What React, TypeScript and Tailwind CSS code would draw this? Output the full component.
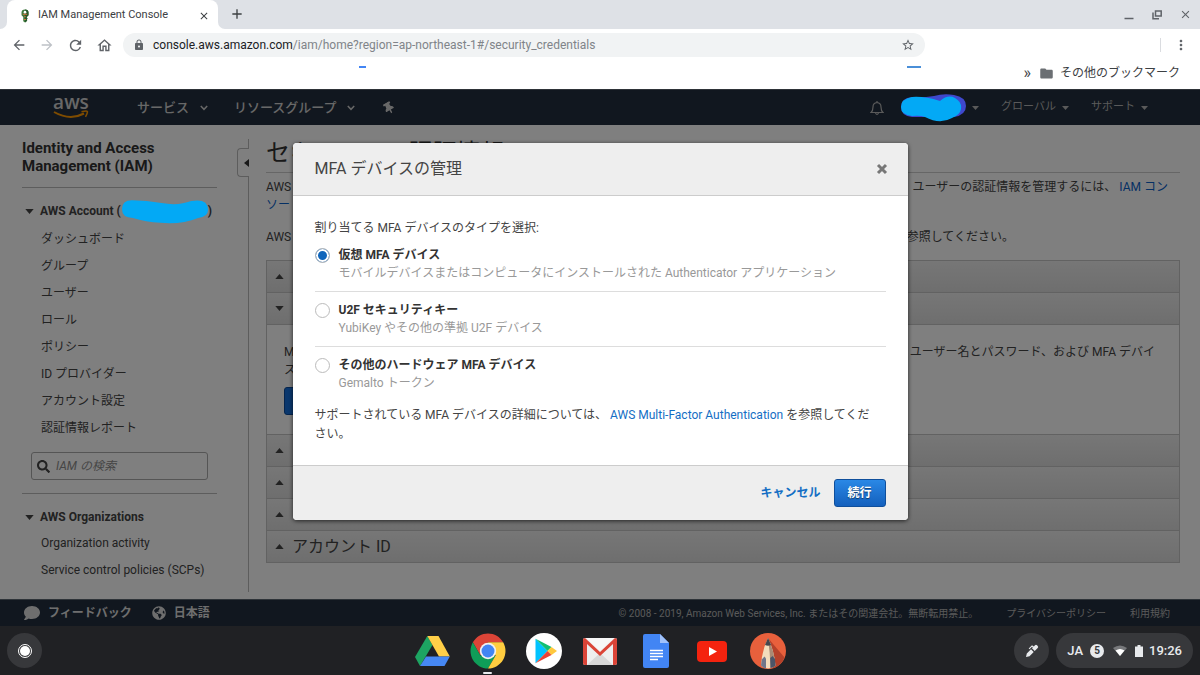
import React from "react";
import { FaSearch, FaComment, FaGlobeAmericas, FaThumbtack } from "react-icons/fa";
import { MdArrowBack, MdArrowForward, MdRefresh, MdOutlineHome, MdLock, MdStarBorder, MdMoreVert, MdFolder, MdClose, MdAdd } from "react-icons/md";

const navItems = [
  "ダッシュボード",
  "グループ",
  "ユーザー",
  "ロール",
  "ポリシー",
  "ID プロバイダー",
  "アカウント設定",
  "認証情報レポート",
];

const devices = [
  { id: "virtual", name: "仮想 MFA デバイス", note: "モバイルデバイスまたはコンピュータにインストールされた Authenticator アプリケーション" },
  { id: "u2f", name: "U2F セキュリティキー", note: "YubiKey やその他の準拠 U2F デバイス" },
  { id: "hardware", name: "その他のハードウェア MFA デバイス", note: "Gemalto トークン" },
];

function Triangle({ up = false }: { up?: boolean }) {
  return (
    <svg viewBox="0 0 10 6" className="h-[5px] w-[9px] shrink-0" fill="currentColor">
      <path d={up ? "M5 0 10 6H0z" : "M0 0h10L5 6z"} />
    </svg>
  );
}

function Caret() {
  return (
    <svg viewBox="0 0 7 4" className="h-1 w-[7px] shrink-0" fill="currentColor">
      <path d="M0 0h7L3.500 4z" />
    </svg>
  );
}

function Chevron() {
  return (
    <svg viewBox="0 0 8 6" className="h-[6px] w-2" fill="none" stroke="currentColor" strokeWidth="1.500">
      <path d="M.8 1 4 4.300 7.200 1" />
    </svg>
  );
}

function BrowserChrome() {
  return (
    <header className="bg-white text-[#5f6368]">
      <div className="flex h-[29px] items-end justify-between bg-[#dee1e6]">
        <div className="flex items-end">
          <div className="h-[29px] w-[7px] bg-white">
            <div className="h-full rounded-br-lg bg-[#dee1e6]" />
          </div>
          <div className="flex h-[29px] w-[211px] items-center rounded-t-lg bg-white pt-0.5 pr-2 pl-[11px]">
            <svg viewBox="0 0 14 16" className="h-3.5 w-3.5">
              <path d="M3 4q0-3.500 4-3.500T11 4v3L9 9v1l1 1-1 1 .5 1.500L7 15.500 5 14V9L3 7z" fill="#3f7a3c" />
              <path d="M7 .5Q11 .5 11 4v3L9 9v1l1 1-1 1 .5 1.500L7 15.500z" fill="#275a2b" />
              <path d="M4.500 6h5M7 8v1.500M6 12h2" stroke="#e0713c" strokeWidth="1.400" />
              <circle cx="7" cy="3.600" r="1.500" fill="#fff" />
            </svg>
            <span className="ml-1.5 flex-1 text-[11px] text-[#3c4043]">IAM Management Console</span>
            <button aria-label="タブを閉じる" className="text-[#3c4043]"><MdClose size={12} /></button>
          </div>
          <div className="h-[29px] w-[7px] bg-white">
            <div className="h-full rounded-bl-lg bg-[#dee1e6]" />
          </div>
          <button aria-label="新しいタブ" className="mb-[7px] ml-1 text-[#3c4043]"><MdAdd size={16} /></button>
        </div>
        <div className="mb-2 flex items-center gap-4 pr-2">
          <button aria-label="最小化">
            <svg viewBox="0 0 12 12" className="size-3"><path d="M1.500 9.500h9" stroke="currentColor" strokeWidth="1.500" /></svg>
          </button>
          <button aria-label="元のサイズに戻す">
            <svg viewBox="0 0 12 12" className="size-3" fill="none" stroke="currentColor" strokeWidth="1.500"><path d="M4.500 2h5.700v5H4.500zM2 3.500v6.200h6" /></svg>
          </button>
          <button aria-label="閉じる"><MdClose size={13} /></button>
        </div>
      </div>
      <div className="flex h-8 items-center pr-[11px] pl-[11px]">
        <nav className="flex items-center gap-3">
          <button aria-label="戻る"><MdArrowBack size={16} /></button>
          <button aria-label="進む" className="text-[#bdc1c6]"><MdArrowForward size={16} /></button>
          <button aria-label="再読み込み"><MdRefresh size={17} /></button>
          <button aria-label="ホーム"><MdOutlineHome size={17} /></button>
        </nav>
        <div className="ml-2.5 flex h-6 w-[802px] items-center rounded-full bg-[#f1f3f4] px-2.5">
          <MdLock size={12} />
          <span className="ml-2 flex-1 text-xs text-[#808489]">
            <span className="text-[#202124]">console.aws.amazon.com</span>/iam/home?region=ap-northeast-1#/security_credentials
          </span>
          <button aria-label="ブックマークに追加"><MdStarBorder size={14} /></button>
        </div>
        <div className="ml-auto flex items-center gap-3">
          <span className="h-3.5 w-px bg-[#dadce0]" />
          <button aria-label="メニュー"><MdMoreVert size={16} /></button>
        </div>
      </div>
      <div className="flex h-7 items-start pl-[359px]">
        <span className="mt-[5px] h-0.5 w-[7px] bg-[#4285f4]" />
        <span className="mt-[5px] ml-[541px] h-0.5 w-3.5 bg-[#4a8fd8]" />
        <div className="ml-auto flex h-6 items-center pr-5 text-xs text-[#3c4043]">
          <span className="mr-2 text-base leading-none">»</span>
          <MdFolder size={15} className="mr-1.5 text-[#6b6f73]" />
          <a href="#bookmarks">その他のブックマーク</a>
        </div>
      </div>
    </header>
  );
}

function ConsoleNav() {
  return (
    <nav className="flex h-9 items-center border-t border-[#5d6670] bg-[#232f3e] pr-[52px] pl-[53px] text-[13px] font-medium text-[#d0d0d0]">
      <a href="#aws" className="flex w-9 flex-col items-center">
        <span className="font-['Open_Sans'] text-[19px] leading-[15px] font-semibold text-[#d0d0d0]">aws</span>
        <svg viewBox="0 0 36 10" className="h-[10px] w-9">
          <path d="M1 2q16 9 30 1.500" fill="none" stroke="#ff9900" strokeWidth="2" />
          <path d="M28.500 1.800q6-1.500 6 0t-2 5" fill="none" stroke="#ff9900" strokeWidth="1.500" />
        </svg>
      </a>
      <a href="#services" className="ml-12 flex items-center gap-[11px]">サービス<Chevron /></a>
      <a href="#groups" className="ml-[26px] flex items-center gap-[10px]">リソースグループ<Chevron /></a>
      <button aria-label="ピン留め" className="ml-7 -rotate-30"><FaThumbtack size={12} /></button>
      <div className="ml-auto flex items-center text-[11px] font-normal text-[#b4b4b4]">
        <button aria-label="通知">
          <svg viewBox="0 0 14 16" className="h-4 w-3.5" fill="none" stroke="currentColor" strokeWidth="1.200">
            <path d="M1 12.500q2-1.500 2-5.500 0-4 4-4.500Q11 3 11 7q0 4 2 5.500zM7 1v1.500M5.500 13q1.500 3 3 0" />
          </svg>
        </button>
        <button aria-label="アカウント" className="ml-4 flex items-center gap-1">
          <svg viewBox="0 0 68 30" className="relative z-20 h-[30px] w-[68px]">
            <path d="M12 4q10 1 22-1Q44 0 54 2q12 2 12 11 0 9-12 11H12Q1 23 1 14T12 4z" fill="#3f48cc" />
            <path d="M12 4q12-1 28 4Q48 1 55 5q7 4 6 11-1 6-9 9-12 7-27-1-5-2-13-1Q1 22 1 14T12 4z" fill="#03a9f5" />
          </svg>
          <Caret />
        </button>
        <button className="ml-[22px] flex items-center gap-1.5">グローバル<Caret /></button>
        <button className="ml-[22px] flex items-center gap-1.5">サポート<Caret /></button>
      </div>
    </nav>
  );
}

function Sidebar() {
  return (
    <aside className="relative w-[249px] shrink-0 pt-3.5 pr-8 pb-2 pl-[22px] text-xs text-[#444]">
      <h2 className="text-[15px] leading-[18px] font-bold text-[#333]">Identity and Access Management (IAM)</h2>
      <hr className="mt-3 border-[#bbb]" />
      <div className="mt-[11px] flex h-6 items-center gap-1.5 pl-[3px] font-bold">
        <Triangle />
        <span className="flex items-center whitespace-nowrap">
          AWS Account (
          <svg viewBox="0 0 88 27" className="relative z-20 -my-2 h-[27px] w-[87px]">
            <path d="M11 2q15 0 30 3 17 3 30-2 17-3 17 9 0 7-10 8-17 7-38 5-15-1-28-5Q1 20 1 11T11 2z" fill="#03a9f5" />
          </svg>
          )
        </span>
      </div>
      <ul className="mt-0.5 pl-[19px]">
        {navItems.map((item) => (
          <li key={item} className="flex h-[27px] items-center"><a href="#nav">{item}</a></li>
        ))}
      </ul>
      <label className="mt-[11px] mr-[9px] ml-[9px] flex h-7 items-center gap-1.5 rounded-[3px] border border-[#aaa] px-[5px]">
        <FaSearch size={13} className="shrink-0" />
        <input aria-label="IAM の検索" placeholder="IAM の検索" className="w-full min-w-0 bg-transparent text-xs italic outline-none placeholder:text-[#8c8c8c]" />
      </label>
      <hr className="mt-[13px] border-[#bbb]" />
      <div className="mt-[11px] flex h-6 items-center gap-1.5 pl-[3px] font-bold">
        <Triangle />AWS Organizations
      </div>
      <ul className="pl-[19px]">
        <li className="flex h-[27px] items-center"><a href="#activity">Organization activity</a></li>
        <li className="flex h-[27px] items-center"><a href="#scp">Service control policies (SCPs)</a></li>
      </ul>
      <span className="absolute top-3.5 right-0 bottom-[7px] w-px bg-[#bbb]" />
      <button aria-label="サイドバーを閉じる" className="absolute top-[23px] right-0 flex h-[29px] w-3 items-center justify-end rounded-l border border-r-0 border-[#bbb] bg-white text-[#333]">
        <svg viewBox="0 0 5 8" className="h-2 w-[5px]"><path d="M5 0v8L0 4z" fill="currentColor" /></svg>
      </button>
    </aside>
  );
}

function Section({ label, title, open = false }: { label?: string; title?: string; open?: boolean }) {
  return (
    <button aria-label={label} className="flex h-8 w-full items-center gap-2 border-b border-[#c4c4c4] bg-linear-to-b from-[#eee] to-[#ddd] px-2 text-base text-[#444]">
      <Triangle up={!open} />{title}
    </button>
  );
}

function Credentials() {
  return (
    <section className="min-w-0 flex-1 overflow-hidden pt-3.5 pr-5 pl-[17px] text-xs leading-[18px] text-[#444]">
      <h1 className="border-b border-[#ccc] pb-[5px] text-2xl leading-7 text-[#333]">セキュリティ認証情報</h1>
      <div className="mt-[5px] flex justify-between pr-3 whitespace-nowrap">
        <span>AWS</span>
        <span>ユーザーの認証情報を管理するには、 <a href="#iam" className="text-[#0a61c9]">IAM コン</a></span>
      </div>
      <a href="#iam" className="block text-[#0a61c9]">ソー</a>
      <div className="mt-3.5 flex justify-between pr-[166px] whitespace-nowrap">
        <span>AWS</span>
        <span>参照してください。</span>
      </div>
      <div className="mt-3.5 border border-b-0 border-[#c4c4c4]">
        <Section label="パスワード" />
        <Section label="多要素認証 (MFA)" open />
        <div className="h-[110px] border-b border-[#c4c4c4] px-[17px] pt-[18px]">
          <div className="flex justify-between pr-[7px] whitespace-nowrap">
            <span>M</span>
            <span>ユーザー名とパスワード、および MFA デバイ</span>
          </div>
          <p>ス</p>
          <button aria-label="MFA の有効化" className="mt-2 h-7 w-24 rounded-[3px] border border-[#0a4a9c] bg-[#146eda]" />
        </div>
        <Section label="アクセスキー" />
        <Section label="CloudFront のキーペア" />
        <Section label="X.509 証明書" />
        <Section title="アカウント ID" />
      </div>
    </section>
  );
}

function MfaDialog() {
  return (
    <div role="dialog" aria-labelledby="mfa-title" className="w-[615px] max-w-full overflow-hidden rounded bg-white text-xs text-[#444] shadow-[0_1px_4px_rgba(0,0,0,0.7)]">
      <div className="flex h-[53px] items-center justify-between border-b border-[#ccc] bg-[#eee] pr-5 pl-[22px]">
        <h2 id="mfa-title" className="text-base">MFA デバイスの管理</h2>
        <button aria-label="閉じる" className="text-[#777]">
          <svg viewBox="0 0 12 12" className="size-3"><path d="M2 2l8 8M10 2l-8 8" stroke="currentColor" strokeWidth="3" /></svg>
        </button>
      </div>
      <div className="px-[22px] pt-[23px] pb-[21px] leading-[18px]">
        <fieldset>
          <legend>割り当てる MFA デバイスのタイプを選択:</legend>
          <div className="mt-[9px] flex flex-col">
            {devices.map((d, i) => (
              <label key={d.id} className="mb-[9px] flex gap-[9px] border-b border-[#ddd] pb-[9px] last:mb-0 last:border-0">
                <input
                  type="radio"
                  name="device"
                  defaultChecked={i === 0}
                  className="mt-0.5 size-[15px] shrink-0 appearance-none rounded-full border border-[#bbb] bg-white checked:bg-[#1166bb] checked:shadow-[inset_0_0_0_2px_white]"
                />
                <span>
                  <span className="block font-bold text-[#333]">{d.name}</span>
                  <span className="block text-[#999]">{d.note}</span>
                </span>
              </label>
            ))}
          </div>
        </fieldset>
        <p className="mt-[5px] pr-3 leading-[19px]">
          サポートされている MFA デバイスの詳細については、 <a href="#mfa" className="text-[#146ec4]">AWS Multi-Factor Authentication</a> を参照してください。
        </p>
      </div>
      <div className="flex h-[55px] items-center justify-end gap-[13px] border-t border-[#ccc] bg-[#eee] pr-[22px] font-bold">
        <button className="text-[#146ec4]">キャンセル</button>
        <button className="h-7 w-[52px] rounded-[3px] border border-[#0f4f9c] bg-linear-to-b from-[#2a88e6] to-[#1460bd] text-white text-shadow-[0_1px_1px_rgba(0,0,0,0.5)]">続行</button>
      </div>
    </div>
  );
}

function ConsoleFooter() {
  return (
    <footer className="flex h-[27px] items-center border-t border-[#5d6670] bg-[#232f3e] pr-[30px] pl-6 text-[10px] text-[#b4b4b4]">
      <a href="#feedback" className="flex items-center gap-2 text-xs font-bold text-[#ddd]"><FaComment size={16} />フィードバック</a>
      <a href="#language" className="ml-5 flex items-center gap-2 text-xs font-bold text-[#ddd]"><FaGlobeAmericas size={14} />日本語</a>
      <span className="ml-auto">© 2008 - 2019, Amazon Web Services, Inc. またはその関連会社。無断転用禁止。</span>
      <a href="#privacy" className="ml-7">プライバシーポリシー</a>
      <a href="#terms" className="ml-6">利用規約</a>
    </footer>
  );
}

function AppIcons() {
  return (
    <div className="flex items-center gap-5">
      <button aria-label="ドライブ">
        <svg viewBox="0 0 36 36" className="size-9">
          <path d="M13.300 3 1 24l5 9 12.500-21z" fill="#1da462" />
          <path d="M13.300 3h11.200l11.300 20.500H25z" fill="#ffcf48" />
          <path d="M6 33l6-9.500h23.800L30.500 33z" fill="#4688f4" />
        </svg>
      </button>
      <button aria-label="Chrome" className="relative">
        <svg viewBox="0 0 36 36" className="size-9">
          <path d="M2.850 9.250A17.500 17.500 0 0 1 33.150 9.250H18L10.400 22.400z" fill="#db4437" />
          <path d="M2.850 9.250A17.500 17.500 0 0 0 18 35.500L25.600 22.400H10.400z" fill="#0f9d58" />
          <path d="M18 35.500A17.500 17.500 0 0 0 33.150 9.250H18L25.600 22.400z" fill="#ffcd40" />
          <circle cx="18" cy="18" r="8.200" fill="#f1f1f1" />
          <circle cx="18" cy="18" r="6.500" fill="#4285f4" />
        </svg>
        <span className="absolute -bottom-[5px] left-[13px] h-0.5 w-[9px] rounded bg-[#e8eaed]" />
      </button>
      <button aria-label="Play ストア">
        <svg viewBox="0 0 36 36" className="size-9">
          <circle cx="18" cy="18" r="18" fill="#fff" />
          <path d="M9.500 5.700v24.600L21.500 18z" fill="#00c3ff" />
          <path d="M9.500 5.700l16 8.300-4 4z" fill="#0fbf72" />
          <path d="M25.500 14l5.500 4-5.500 4-4-4z" fill="#ffc83d" />
          <path d="M9.500 30.300l12-12.300 4 4z" fill="#e94335" />
        </svg>
      </button>
      <button aria-label="Gmail">
        <svg viewBox="0 0 36 36" className="size-9">
          <rect x="1" y="5" width="34" height="27" rx="2" fill="#eee" />
          <path d="M5 32l13-12 13 12z" fill="#d8d8d8" />
          <path d="M4 5h28L18 18z" fill="#f7f7f7" />
          <path d="M1 7v23q0 2 2 2h2V11l13 12 13-12v21h2q2 0 2-2V7q0-2-2-2L18 19 3 5Q1 5 1 7z" fill="#db4437" />
        </svg>
      </button>
      <button aria-label="ドキュメント">
        <svg viewBox="0 0 36 36" className="size-9">
          <path d="M7 1h15l9 9v23q0 2-2 2H7q-2 0-2-2V3q0-2 2-2z" fill="#4285f4" />
          <path d="M22 1l9 9h-9z" fill="#a1c2fa" />
          <path d="M12 17.500h13M12 20.500h13M12 23.500h13M12 26.500h8" stroke="#fff" strokeWidth="1.500" />
        </svg>
      </button>
      <button aria-label="YouTube">
        <svg viewBox="0 0 36 36" className="size-9">
          <rect x="3" y="8" width="30" height="21" rx="4" fill="#f4230f" />
          <path d="M15 14v9l8-4.500z" fill="#fff" />
        </svg>
      </button>
      <button aria-label="スケッチ">
        <svg viewBox="0 0 36 36" className="size-9">
          <circle cx="18" cy="18" r="18" fill="#e8603c" />
          <path d="M18 5l16.500 19.500Q31 33 23 35.300z" fill="#b5412a" />
          <path d="M18 5q-6 12-7 27.500 7 6 14.500 0Q24 17 18 5z" fill="#f3dcbc" />
          <path d="M18 5q2 14 2.500 30 3-.5 5-2.500Q24 17 18 5z" fill="#a98a74" />
          <path d="M18 5l-3 7q3 1.500 6 0z" fill="#46464d" />
          <path d="M11 32.500l.8-6 2.700-3 1.500 2v10q-3-1-5-3z" fill="#70768a" />
          <path d="M20.200 25l2.300-2 2.500 3 .5 6.500q-2.500 2-5 2.500z" fill="#4c5568" />
        </svg>
      </button>
    </div>
  );
}

function Shelf() {
  return (
    <footer className="grid h-[49px] grid-cols-[1fr_auto_1fr] items-center bg-[#202124] px-[7px] text-[#e8eaed]">
      <button aria-label="ランチャー" className="flex size-[35px] items-center justify-center rounded-full bg-[#37383b]">
        <span className="flex size-3.5 items-center justify-center rounded-full border border-white"><span className="size-2.5 rounded-full bg-white" /></span>
      </button>
      <AppIcons />
      <div className="flex items-center justify-end gap-[7px]">
        <button aria-label="タッチペン" className="flex size-[35px] items-center justify-center rounded-full bg-[#37383b]">
          <svg viewBox="0 0 14 14" className="size-3.5" fill="currentColor">
            <path d="M1 13l.8-3.500L6 5.300l2.700 2.700-4.200 4.200zM7 4.300l.8-.8L7 2.700 4.500 5.200l-.8-.8L7 1.200l1.800 1.300L10 1.300q1-1 2 0l.7.700q1 1 0 2L9.700 7z" />
          </svg>
        </button>
        <div className="flex h-[35px] items-center rounded-full bg-[#37383b] pr-[11px] pl-[11px] text-[13px] font-medium">
          <span>JA</span>
          <span className="ml-[7px] flex size-3.5 items-center justify-center rounded-full bg-[#e8eaed] text-[10px] font-bold text-[#37383b]">5</span>
          <svg viewBox="0 0 14 12" className="ml-[9px] h-3 w-3.5"><path d="M0 3q7-5 14 0L7 11z" fill="#77787b" /><path d="M2.500 5.500q4.500-3 9 0L7 11z" fill="#fff" /></svg>
          <svg viewBox="0 0 8 12" className="ml-2 h-3 w-2" fill="currentColor"><path d="M2.500 0h3v1.500H8V12H0V1.500h2.500z" /></svg>
          <time className="ml-1.5">19:26</time>
        </div>
      </div>
    </footer>
  );
}

export default function App() {
  return (
    <div className="flex min-h-screen flex-col font-[Roboto,'Noto_Sans_CJK_JP',sans-serif]">
      <BrowserChrome />
      <div className="relative flex flex-1 flex-col bg-white">
        <ConsoleNav />
        <main className="flex flex-1">
          <Sidebar />
          <Credentials />
        </main>
        <ConsoleFooter />
        <div className="absolute inset-0 z-10 bg-black/50" />
        <div className="absolute inset-x-0 top-[54px] z-30 flex justify-center">
          <MfaDialog />
        </div>
      </div>
      <Shelf />
    </div>
  );
}
